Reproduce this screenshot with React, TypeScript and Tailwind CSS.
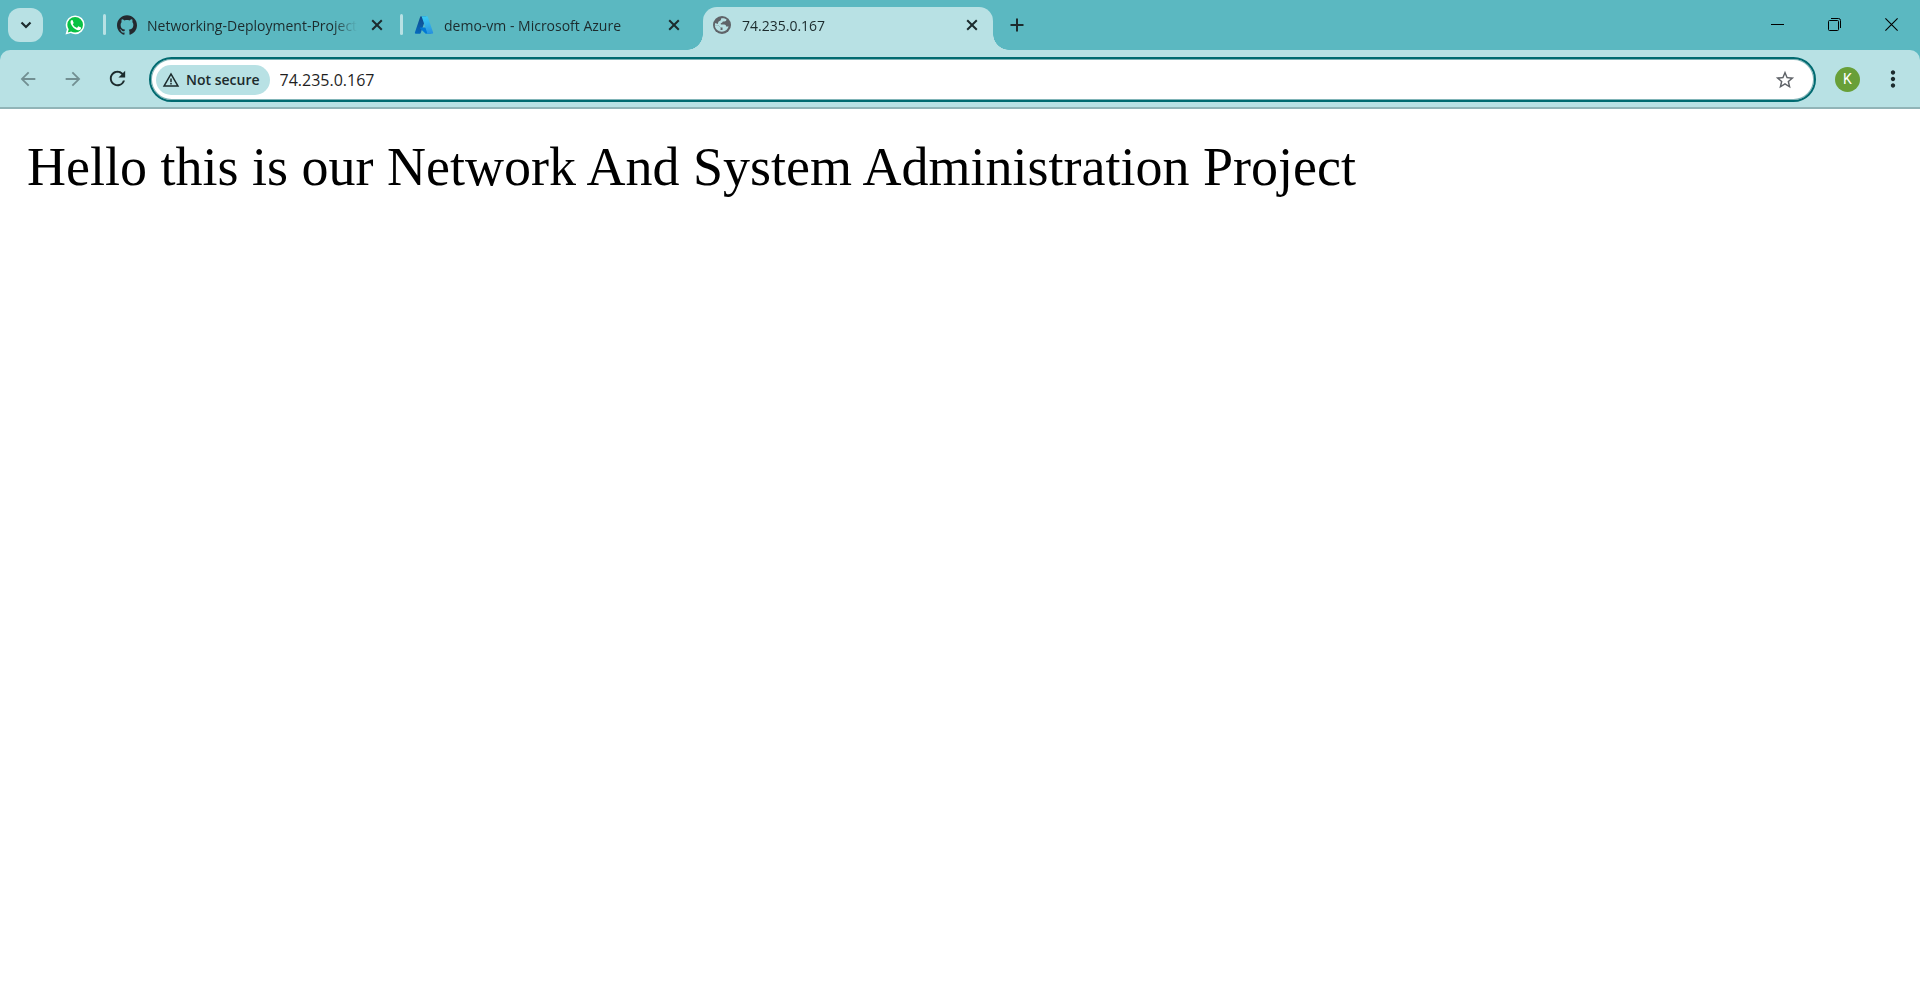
import type { ReactNode } from "react";
import {
  MdArrowBack,
  MdArrowForward,
  MdMoreVert,
  MdRefresh,
  MdStarBorder,
  MdWarningAmber,
} from "react-icons/md";
import { SiGithub } from "react-icons/si";

function CrossIcon() {
  return (
    <svg viewBox="0 0 12 12" className="size-3" fill="none" stroke="currentColor" strokeWidth="2">
      <path d="M1.2 1.2 10.8 10.8M10.8 1.2 1.2 10.8" />
    </svg>
  );
}

function GlobeIcon() {
  return (
    <svg viewBox="0 0 18 18" className="size-[18px]">
      <circle cx="9" cy="9" r="9" fill="#5f6368" />
      <path
        fill="#b8e1e4"
        d="M8.300 2.300c2-.3 3.900.2 5.300 1.300-.2 1.300-1.100 1.800-2.300 1.800H9.800c-.3 1-.8 1.400-2 1.600v1.500h3.400c1.300 0 1.900.9 1.900 2h2.500c-.9 3-3.500 5.200-6.700 5.200-1 0-1.900-.2-2.700-.5l1-1.300h2.300v-2.400H7.400L5.300 9.300H1.900c0-.9.1-1.700.4-2.400l2.500 1.200.6-2.300 2.400-1.500Z"
      />
      <path fill="#b8e1e4" d="M1.800 9.300h3.400l2.400 2.400v1.700l-1.200 1.900C3.700 14.300 1.900 12.100 1.800 9.300Z" />
    </svg>
  );
}

function WhatsAppIcon() {
  return (
    <svg viewBox="0 0 20 20" className="size-5">
      <path
        fill="#fff"
        d="M10.1.4A9.400 9.400 0 0 1 19.600 9.800a9.400 9.400 0 0 1-9.500 9.400c-1.600 0-3.100-.400-4.400-1.100L.500 19.500l1.400-5A9.300 9.300 0 0 1 .700 9.800 9.400 9.400 0 0 1 10.100.400Z"
      />
      <path
        fill="#0ac143"
        d="M10.1 2A7.800 7.800 0 0 1 18 9.800a7.800 7.800 0 0 1-7.900 7.800c-1.500 0-2.800-.400-4-1.100l-3.300.900.900-3.200A7.700 7.700 0 0 1 2.300 9.800 7.800 7.800 0 0 1 10.100 2Z"
      />
      <path
        fill="#fff"
        d="M7.700 5.500c-.200-.4-.4-.4-.7-.4-.5 0-1.500.7-1.500 2.200s1.100 2.900 1.300 3.100c.1.200 2.100 3.400 5.300 4.500 2.500 1 3.600-.4 3.800-1.100.2-.6.200-1.200.1-1.300-.2-.2-1.900-1-2.200-1.100-.3-.1-.5-.1-.7.200l-.9 1.100c-.2.200-.4.200-.7.100-1.700-.8-2.700-1.600-3.600-3.200-.1-.3 0-.4.100-.6l.6-.7c.1-.2.100-.4 0-.6Z"
      />
    </svg>
  );
}

function AzureIcon() {
  return (
    <svg viewBox="0 0 96 96" className="size-5">
      <defs>
        <linearGradient id="azure-left" x1="0.6" y1="0" x2="0.3" y2="1">
          <stop offset="0" stopColor="#114a8b" />
          <stop offset="1" stopColor="#0669bc" />
        </linearGradient>
        <linearGradient id="azure-right" x1="0.4" y1="0" x2="0.6" y2="1">
          <stop offset="0" stopColor="#3ccbf4" />
          <stop offset="1" stopColor="#2892df" />
        </linearGradient>
      </defs>
      <path
        fill="url(#azure-left)"
        d="M33.338 6.544h26.038l-27.030 80.087a4.152 4.152 0 0 1-3.933 2.824H8.149a4.145 4.145 0 0 1-3.928-5.470L29.404 9.368a4.152 4.152 0 0 1 3.934-2.825z"
      />
      <path
        fill="#0078d4"
        d="M71.175 60.261h-41.290a1.911 1.911 0 0 0-1.305 3.309l26.532 24.764a4.171 4.171 0 0 0 2.846 1.121h23.380z"
      />
      <path
        fill="url(#azure-right)"
        d="M66.595 9.364a4.145 4.145 0 0 0-3.928-2.820H33.648a4.146 4.146 0 0 1 3.928 2.820l25.184 74.620a4.146 4.146 0 0 1-3.928 5.472h29.020a4.146 4.146 0 0 0 3.927-5.472z"
      />
    </svg>
  );
}

function Tab({ icon, title, active }: { icon: ReactNode; title: string; active?: boolean }) {
  return (
    <div
      role="tab"
      aria-selected={active ? true : false}
      className={
        active
          ? "relative mt-[7px] flex h-[43px] w-[290px] min-w-0 items-center gap-2.5 rounded-t-[14px] bg-[#b8e1e4] pr-[11px] pl-[9px] pb-[7px]"
          : "mt-[7px] flex h-[43px] w-[290px] min-w-0 items-center gap-2.5 pr-[11px] pl-[9px] pb-[7px]"
      }
    >
      {active && (
        <>
          <span className="absolute bottom-0 -left-4 size-4 bg-[radial-gradient(circle_at_0_0,transparent_15.5px,#b8e1e4_16px)]" />
          <span className="absolute -right-4 bottom-0 size-4 bg-[radial-gradient(circle_at_100%_0,transparent_15.5px,#b8e1e4_16px)]" />
        </>
      )}
      <span className="flex size-5 shrink-0 items-center justify-center">{icon}</span>
      <span className="min-w-0 flex-1 overflow-hidden pt-px text-sm whitespace-nowrap [mask-image:linear-gradient(to_right,#000_calc(100%-24px),transparent)]">
        {title}
      </span>
      <button type="button" aria-label={`Close ${title}`} className="flex size-5 shrink-0 items-center justify-center">
        <CrossIcon />
      </button>
    </div>
  );
}

function Separator() {
  return <span className="mx-[2px] mt-[14px] h-[21px] w-[3px] shrink-0 rounded-full bg-[#b8e1e4]" />;
}

function TabStrip() {
  return (
    <header className="flex h-[50px] items-start">
      <button
        type="button"
        aria-label="Search tabs"
        className="mt-2 ml-2 flex h-[34px] w-[35px] shrink-0 items-center justify-center rounded-xl bg-[#b8e1e4]"
      >
        <svg viewBox="0 0 12 8" className="h-2 w-3" fill="none" stroke="currentColor" strokeWidth="2.2">
          <path d="m1.500 1.500 4.500 4.500 4.500-4.500" />
        </svg>
      </button>
      <div role="tablist" className="flex min-w-0 items-start">
        <button
          type="button"
          role="tab"
          aria-selected="false"
          aria-label="WhatsApp"
          className="mt-[15px] mr-4 ml-[22px] shrink-0"
        >
          <WhatsAppIcon />
        </button>
        <Separator />
        <Tab icon={<SiGithub className="size-5 text-[#24292f]" />} title="Networking-Deployment-Project" />
        <Separator />
        <Tab icon={<AzureIcon />} title="demo-vm - Microsoft Azure" />
        <span className="w-2 shrink-0" />
        <Tab active icon={<GlobeIcon />} title="74.235.0.167" />
      </div>
      <button type="button" aria-label="New tab" className="mt-[7px] ml-1.5 flex size-9 shrink-0 items-center justify-center">
        <svg viewBox="0 0 14 14" className="size-3.5" stroke="currentColor" strokeWidth="2">
          <path d="M7 .5v13M.5 7h13" />
        </svg>
      </button>
      <div className="ml-auto flex shrink-0">
        <button type="button" aria-label="Minimize" className="flex h-12 w-[57px] items-center justify-center">
          <span className="h-px w-[13px] bg-black" />
        </button>
        <button type="button" aria-label="Restore" className="flex h-12 w-[57px] items-center justify-center">
          <svg viewBox="0 0 13 13" className="size-[13px]" fill="none" stroke="#000">
            <rect x=".5" y="2.500" width="10" height="10" rx="1" />
            <path d="M3 .5h7.500a2 2 0 0 1 2 2V10" />
          </svg>
        </button>
        <button type="button" aria-label="Close window" className="flex h-12 w-[57px] items-center justify-center">
          <svg viewBox="0 0 13 13" className="size-[13px]" stroke="#000" strokeWidth="1.100">
            <path d="m.4.4 12.200 12.200M12.600.4.4 12.600" />
          </svg>
        </button>
      </div>
    </header>
  );
}

function Toolbar() {
  return (
    <div className="flex h-[59px] items-start rounded-t-[10px] border-b-2 border-[#91b4b7] bg-[#b8e1e4] pt-[7px] pr-[5px] pl-[5px]">
      <button type="button" aria-label="Back" className="flex h-[43px] w-[45px] shrink-0 items-center justify-center text-[#728f92]">
        <MdArrowBack className="size-[22px]" />
      </button>
      <button type="button" aria-label="Forward" className="flex h-[43px] w-[45px] shrink-0 items-center justify-center text-[#728f92]">
        <MdArrowForward className="size-[22px]" />
      </button>
      <button type="button" aria-label="Reload" className="flex h-[43px] w-[45px] shrink-0 items-center justify-center">
        <MdRefresh className="size-[23px]" />
      </button>
      <div className="mx-[9px] flex h-[45px] min-w-0 flex-1 items-center rounded-full border-2 border-[#006a70] bg-white pr-[18px] pl-[5px] shadow-[inset_0_0_0_1px_#80b4b7]">
        <button
          type="button"
          className="flex h-[30px] shrink-0 items-center gap-1.5 rounded-full bg-[#b8e1e4] pr-2.5 pl-1.5 text-sm font-semibold"
        >
          <MdWarningAmber className="size-[18px]" />
          Not secure
        </button>
        <input
          aria-label="Address"
          type="text"
          defaultValue="74.235.0.167"
          className="ml-[10px] min-w-0 flex-1 bg-transparent text-base text-[#1f1f1f] outline-none"
        />
        <button type="button" aria-label="Bookmark this page" className="shrink-0 text-[#5f6368]">
          <MdStarBorder className="size-[22px]" />
        </button>
      </div>
      <button type="button" aria-label="Profile" className="flex h-11 w-[45px] shrink-0 items-center justify-center">
        <span className="flex size-[25px] items-center justify-center rounded-full bg-[#689f38] font-['Roboto'] text-sm text-white">
          K
        </span>
      </button>
      <button type="button" aria-label="Menu" className="flex h-11 w-[45px] shrink-0 items-center justify-center">
        <MdMoreVert className="size-[26px]" />
      </button>
    </div>
  );
}

export default function App() {
  return (
    <div className="min-h-screen bg-white">
      <div className="bg-[#5bb8c1] font-['Open_Sans',sans-serif] text-[#1c2b2d]">
        <TabStrip />
        <Toolbar />
      </div>
      <main className="px-[27px] pt-[27px] font-['Liberation_Serif',serif] text-[54px] leading-[62px] text-black">
        <p>Hello this is our Network And System Administration Project</p>
      </main>
    </div>
  );
}
